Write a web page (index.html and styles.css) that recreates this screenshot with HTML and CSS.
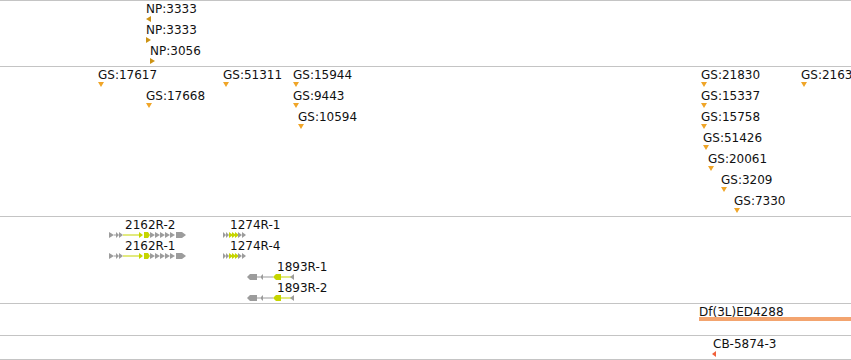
FILE: index.html
```html
<!DOCTYPE html>
<html lang="en">
<head>
	<meta charset="UTF-8">
	<title>Track view</title>
	<link rel="stylesheet" href="styles.css">
</head>
<body>
	<div class="browser">
		<!-- protein hits -->
		<div class="track track-np">
			<div class="feat" style="left:146px;top:1px">
				<span class="label">NP:3333</span>
				<svg class="tri tri-np" width="6" height="6"><polygon points="0,3 5,0 5,6"/></svg>
			</div>
			<div class="feat" style="left:146px;top:22px">
				<span class="label">NP:3333</span>
				<svg class="tri tri-np" width="6" height="6"><polygon points="0,0 5,3 0,6"/></svg>
			</div>
			<div class="feat" style="left:150px;top:43px">
				<span class="label">NP:3056</span>
				<svg class="tri tri-np" width="6" height="6"><polygon points="0,0 5,3 0,6"/></svg>
			</div>
		</div>

		<!-- GS insertions -->
		<div class="track track-gs">
			<div class="feat" style="left:98px;top:1px">
				<span class="label">GS:17617</span>
				<svg class="tri tri-gs" width="7" height="5"><polygon points="0,0 6,0 3,5"/></svg>
			</div>
			<div class="feat" style="left:146px;top:22px">
				<span class="label">GS:17668</span>
				<svg class="tri tri-gs" width="7" height="5"><polygon points="0,0 6,0 3,5"/></svg>
			</div>
			<div class="feat" style="left:223px;top:1px">
				<span class="label">GS:51311</span>
				<svg class="tri tri-gs" width="7" height="5"><polygon points="0,0 6,0 3,5"/></svg>
			</div>
			<div class="feat" style="left:293px;top:1px">
				<span class="label">GS:15944</span>
				<svg class="tri tri-gs" width="7" height="5"><polygon points="0,0 6,0 3,5"/></svg>
			</div>
			<div class="feat" style="left:293px;top:22px">
				<span class="label">GS:9443</span>
				<svg class="tri tri-gs" width="7" height="5"><polygon points="0,0 6,0 3,5"/></svg>
			</div>
			<div class="feat" style="left:298px;top:43px">
				<span class="label">GS:10594</span>
				<svg class="tri tri-gs" width="7" height="5"><polygon points="0,0 6,0 3,5"/></svg>
			</div>
			<div class="feat" style="left:701px;top:1px">
				<span class="label">GS:21830</span>
				<svg class="tri tri-gs" width="7" height="5"><polygon points="0,0 6,0 3,5"/></svg>
			</div>
			<div class="feat" style="left:701px;top:22px">
				<span class="label">GS:15337</span>
				<svg class="tri tri-gs" width="7" height="5"><polygon points="0,0 6,0 3,5"/></svg>
			</div>
			<div class="feat" style="left:701px;top:43px">
				<span class="label">GS:15758</span>
				<svg class="tri tri-gs" width="7" height="5"><polygon points="0,0 6,0 3,5"/></svg>
			</div>
			<div class="feat" style="left:703px;top:64px">
				<span class="label">GS:51426</span>
				<svg class="tri tri-gs" width="7" height="5"><polygon points="0,0 6,0 3,5"/></svg>
			</div>
			<div class="feat" style="left:708px;top:85px">
				<span class="label">GS:20061</span>
				<svg class="tri tri-gs" width="7" height="5"><polygon points="0,0 6,0 3,5"/></svg>
			</div>
			<div class="feat" style="left:721px;top:106px">
				<span class="label">GS:3209</span>
				<svg class="tri tri-gs" width="7" height="5"><polygon points="0,0 6,0 3,5"/></svg>
			</div>
			<div class="feat" style="left:734px;top:127px">
				<span class="label">GS:7330</span>
				<svg class="tri tri-gs" width="7" height="5"><polygon points="0,0 6,0 3,5"/></svg>
			</div>
			<!-- runs off the right edge of the view, as in the browser -->
			<div class="feat" style="left:801px;top:1px">
				<span class="label">GS:21631</span>
				<svg class="tri tri-gs" width="7" height="5"><polygon points="0,0 6,0 3,5"/></svg>
			</div>
		</div>

		<!-- transcripts -->
		<div class="track track-genes">
			<div class="feat" style="left:108px;top:1px">
				<span class="label" style="margin-left:17px">2162R-2</span>
				<svg class="gene" width="80" height="6">
					<g class="utr">
						<polygon points="1,0 6,3 1,6"/>
						<rect x="6" y="2.5" width="3" height="1"/>
						<polygon points="8,0 11,3 8,6"/>
						<polygon points="11,0 15,3 11,6"/>
					</g>
					<g class="cds">
						<rect x="15" y="2.5" width="17" height="1"/>
						<polygon points="31,0 35,3 31,6"/>
						<polygon points="36,0 40,0 42,3 40,6 36,6"/>
					</g>
					<g class="utr">
						<polygon points="42,0 47,3 42,6"/>
						<polygon points="47,0 52,3 47,6"/>
						<polygon points="52,0 57,3 52,6"/>
						<polygon points="57,0 62,3 57,6"/>
						<polygon points="62,0 67,3 62,6"/>
						<polygon points="68,0 74,0 78,3 74,6 68,6"/>
					</g>
				</svg>
			</div>
			<div class="feat" style="left:108px;top:22px">
				<span class="label" style="margin-left:17px">2162R-1</span>
				<svg class="gene" width="80" height="6">
					<g class="utr">
						<polygon points="1,0 6,3 1,6"/>
						<rect x="6" y="2.5" width="3" height="1"/>
						<polygon points="8,0 11,3 8,6"/>
						<polygon points="11,0 15,3 11,6"/>
					</g>
					<g class="cds">
						<rect x="15" y="2.5" width="17" height="1"/>
						<polygon points="31,0 35,3 31,6"/>
						<polygon points="36,0 40,0 42,3 40,6 36,6"/>
					</g>
					<g class="utr">
						<polygon points="42,0 47,3 42,6"/>
						<polygon points="47,0 52,3 47,6"/>
						<polygon points="52,0 57,3 52,6"/>
						<polygon points="57,0 62,3 57,6"/>
						<polygon points="62,0 67,3 62,6"/>
						<polygon points="68,0 74,0 78,3 74,6 68,6"/>
					</g>
				</svg>
			</div>
			<div class="feat" style="left:222px;top:1px">
				<span class="label" style="margin-left:8px">1274R-1</span>
				<svg class="gene" width="28" height="6">
					<g class="utr">
						<polygon points="1,0 4,3 1,6"/>
						<polygon points="4,0 7,3 4,6"/>
					</g>
					<g class="cds">
						<polygon points="7,0 11,3 7,6"/>
						<polygon points="10,0 14,3 10,6"/>
						<polygon points="13,0 17,3 13,6"/>
					</g>
					<g class="utr">
						<polygon points="16,0 20,3 16,6"/>
						<polygon points="20,0 24,3 20,6"/>
					</g>
				</svg>
			</div>
			<div class="feat" style="left:222px;top:22px">
				<span class="label" style="margin-left:8px">1274R-4</span>
				<svg class="gene" width="28" height="6">
					<g class="utr">
						<polygon points="1,0 4,3 1,6"/>
						<polygon points="4,0 7,3 4,6"/>
					</g>
					<g class="cds">
						<polygon points="7,0 11,3 7,6"/>
						<polygon points="10,0 14,3 10,6"/>
						<polygon points="13,0 17,3 13,6"/>
					</g>
					<g class="utr">
						<polygon points="16,0 20,3 16,6"/>
						<polygon points="20,0 24,3 20,6"/>
					</g>
				</svg>
			</div>
			<div class="feat" style="left:246px;top:43px">
				<span class="label" style="margin-left:31px">1893R-1</span>
				<svg class="gene" width="50" height="6">
					<g class="utr">
						<polygon points="1,3 4,0 11,0 11,6 4,6"/>
						<rect x="11" y="2.5" width="3" height="1"/>
						<polygon points="14,3 17,0 17,6"/>
						<rect x="17" y="2.5" width="10" height="1"/>
					</g>
					<g class="cds">
						<polygon points="27,3 30,0 35,0 35,6 30,6"/>
						<rect x="35" y="2.5" width="10" height="1"/>
					</g>
					<g class="utr">
						<polygon points="44,3 48,0 48,6"/>
					</g>
				</svg>
			</div>
			<div class="feat" style="left:246px;top:64px">
				<span class="label" style="margin-left:31px">1893R-2</span>
				<svg class="gene" width="50" height="6">
					<g class="utr">
						<polygon points="1,3 4,0 11,0 11,6 4,6"/>
						<rect x="11" y="2.5" width="3" height="1"/>
						<polygon points="14,3 17,0 17,6"/>
						<rect x="17" y="2.5" width="10" height="1"/>
					</g>
					<g class="cds">
						<polygon points="27,3 30,0 35,0 35,6 30,6"/>
						<rect x="35" y="2.5" width="10" height="1"/>
					</g>
					<g class="utr">
						<polygon points="44,3 48,0 48,6"/>
					</g>
				</svg>
			</div>
		</div>

		<!-- deficiencies -->
		<div class="track track-df">
			<div class="feat feat-wide" style="left:699px;top:1px">
				<span class="label">Df(3L)ED4288</span>
				<div class="df-bar"></div>
			</div>
		</div>

		<!-- other insertions -->
		<div class="track track-cb">
			<div class="feat" style="left:712px;top:1px">
				<span class="label" style="margin-left:1px">CB-5874-3</span>
				<svg class="tri tri-cb" width="5" height="6"><polygon points="0,3 4,0 4,6"/></svg>
			</div>
		</div>
	</div>
</body>
</html>
```

FILE: styles.css
```css
:root {
	--rule-color: #c4c4c4;
	--text-color: #111;
	--gs-color: #f0a528;
	--np-color: #cc9314;
	--cds-color: #c6d500;
	--utr-color: #9c9c9c;
	--df-color: #f3a46f;
	--cb-color: #f0603a;
}

html, body {
	margin: 0;
	padding: 0;
	background: #fff;
	overflow: hidden;
}

.browser {
	width: 851px;
	display: flex;
	flex-direction: column;
	border-bottom: 1px solid var(--rule-color);
	font-family: "DejaVu Sans", Verdana, sans-serif;
	color: var(--text-color);
}

.track {
	position: relative;
	overflow: hidden;
	border-top: 1px solid var(--rule-color);
}

.track-np { height: 65px; }
.track-gs { height: 149px; }
.track-genes { height: 86px; }
.track-df { height: 31px; }
.track-cb { height: 23px; }

.feat {
	position: absolute;
	display: flex;
	flex-direction: column;
	align-items: flex-start;
}

.feat-wide {
	right: -10px;
}

.label {
	font-size: 12px;
	line-height: 14px;
	white-space: nowrap;
}

.tri,
.gene {
	display: block;
}

.tri-gs { fill: var(--gs-color); }
.tri-np { fill: var(--np-color); }
.tri-cb { fill: var(--cb-color); }

.gene .utr { fill: var(--utr-color); }
.gene .cds { fill: var(--cds-color); }

.df-bar {
	align-self: stretch;
	height: 4px;
	margin-top: -2px;
	background: var(--df-color);
}
```
